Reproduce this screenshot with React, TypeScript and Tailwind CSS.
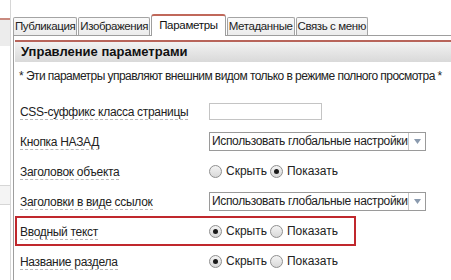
import React from "react";

function Radio({ checked }: { checked?: boolean }) {
  return (
    <span className="inline-flex h-[13px] w-[13px] shrink-0 items-center justify-center rounded-full border border-[#8f8f8f] bg-gradient-to-b from-[#f4f4f4] to-[#d8d8d8]">
      {checked && <span className="h-[5px] w-[5px] rounded-full bg-[#1a1a1a]" />}
    </span>
  );
}

function ShowHide({ show }: { show: boolean }) {
  return (
    <div className="flex items-center whitespace-nowrap text-[12px] text-[#222]">
      <Radio checked={!show} />
      <span className="ml-[4px] mr-[3px]">Скрыть</span>
      <Radio checked={show} />
      <span className="ml-[4px]">Показать</span>
    </div>
  );
}

function Select() {
  return (
    <div className="flex h-[19px] w-[217px] shrink-0 items-center border border-[#9a9a9a] bg-white text-[12px] text-[#222]">
      <span className="flex-1 overflow-hidden whitespace-nowrap pl-[2px] tracking-[-0.35px]">Использовать глобальные настройки</span>
      <span className="flex h-full w-[17px] items-center justify-center border-l border-[#c8c8c8]">
        <svg width="7" height="5" viewBox="0 0 7 5">
          <path d="M0 0 L7 0 L3.5 5 Z" fill="#8a9aae" />
        </svg>
      </span>
    </div>
  );
}

function Label({ children }: { children: React.ReactNode }) {
  return (
    <span className="whitespace-nowrap border-b border-dashed border-[#b8b8b8] text-[12px] leading-[14px] tracking-[-0.3px] text-[#222]">
      {children}
    </span>
  );
}

function Row({ label, children, boxed }: { label: string; children: React.ReactNode; boxed?: boolean }) {
  return (
    <div
      className={
        boxed
          ? "flex h-[30px] w-[341px] items-center border-2 border-[#c0282d] pl-[3px]"
          : "flex h-[30px] items-center pl-[5px]"
      }
    >
      <div className="w-[189px] shrink-0">
        <Label>{label}</Label>
      </div>
      {children}
    </div>
  );
}

const tabs = ["Публикация", "Изображения", "Параметры", "Метаданные", "Связь с меню"];

export default function App() {
  return (
    <div
      className="flex h-[280px] w-[451px] overflow-hidden bg-white"
      style={{ fontFamily: "'Liberation Sans', Arial, sans-serif" }}
    >
      <div className="flex w-[11px] shrink-0 flex-col border-r border-[#d6d6d6]">
        <div className="h-[18px] bg-white" />
        <div className="h-[28px] border-t-2 border-[#c98a7f] bg-[#ececec]" />
        <div className="h-[139px] bg-white" />
        <div className="h-[20px] border-y border-[#d6d6d6] bg-[#f4f4f4]" />
        <div className="flex-1 bg-white" />
      </div>
      <div className="flex min-w-0 flex-1 flex-col pl-[2px]">
        <div className="flex h-[36px] items-end border-b border-[#9e9e9e]">
          {tabs.map((t) =>
            t === "Параметры" ? (
              <div
                key={t}
                className="-mb-px mr-px flex h-[22px] items-center whitespace-nowrap rounded-t-[3px] border border-b-0 border-t-2 border-[#9e9e9e] border-t-[#c0685a] bg-white px-[7px] text-[11.5px] tracking-[-0.3px] text-[#111]"
              >
                {t}
              </div>
            ) : (
              <div
                key={t}
                className="mr-px flex h-[18px] items-center whitespace-nowrap rounded-t-[2px] border border-b-0 border-[#a4a4a4] bg-gradient-to-b from-[#fafafa] to-[#ececec] px-[1px] text-[11.5px] tracking-[-0.4px] text-[#222]"
              >
                {t}
              </div>
            )
          )}
        </div>
        <div className="flex flex-1 flex-col border-l border-[#9e9e9e] pl-[1px] pt-[4px]">
          <div className="h-[2px] bg-[#b8645a]" />
          <div className="flex h-[20px] items-center bg-gradient-to-b from-[#f2f2f2] to-[#d9d9d9] pl-[6px] text-[13px] font-bold text-[#111]">
            Управление параметрами
          </div>
          <div className="whitespace-nowrap pl-[4px] pt-[5px] text-[12px] tracking-[-0.55px] text-[#222]">
            * Эти параметры управляют внешним видом только в режиме полного просмотра *
          </div>
          <div className="flex flex-col pt-[11px]">
            <Row label="CSS-суффикс класса страницы">
              <div className="h-[17px] w-[113px] shrink-0 border border-[#c4c4c4] bg-white" />
            </Row>
            <Row label="Кнопка НАЗАД">
              <Select />
            </Row>
            <Row label="Заголовок объекта">
              <ShowHide show />
            </Row>
            <Row label="Заголовки в виде ссылок">
              <Select />
            </Row>
            <Row label="Вводный текст" boxed>
              <ShowHide show={false} />
            </Row>
            <Row label="Название раздела">
              <ShowHide show={false} />
            </Row>
          </div>
        </div>
      </div>
    </div>
  );
}
